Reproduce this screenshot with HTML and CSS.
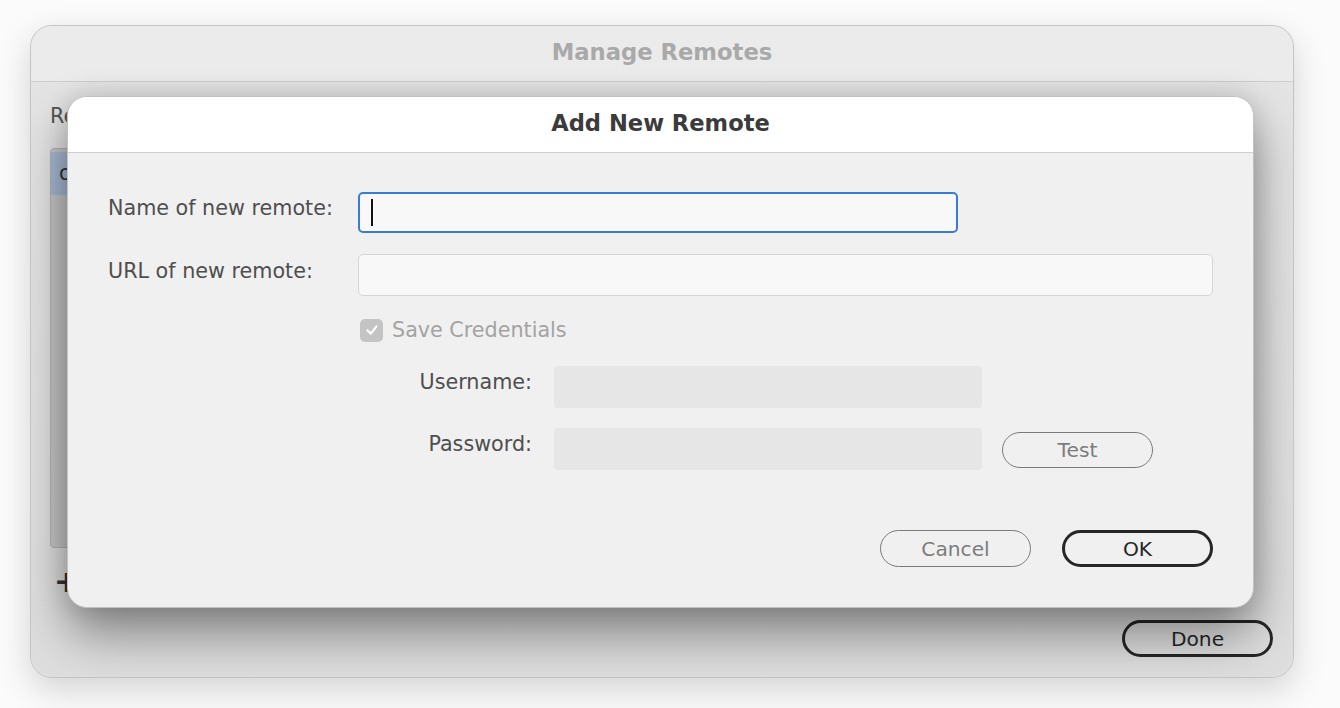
FILE: index.html
```html
<!DOCTYPE html>
<html lang="en">
<head>
    <meta charset="UTF-8">
    <meta name="viewport" content="width=device-width, initial-scale=1.0">
    <title>Manage Remotes</title>
    <link rel="stylesheet" href="styles.css">
</head>
<body>

<div class="window">
    <div class="window-header">Manage Remotes</div>

    <div class="window-body">
        <div class="list-label">Remotes:</div>
        <div class="remote-list">
            <div class="remote-row selected">origin</div>
        </div>
        <div class="list-tools">
            <span class="plus">+</span>
        </div>
        <div class="window-footer">
            <button class="btn btn-default">Done</button>
        </div>
    </div>

    <!-- sheet on top of the window -->
    <div class="sheet">
        <div class="sheet-header">Add New Remote</div>

        <div class="sheet-body">
            <div class="row row-name">
                <label for="name">Name of new remote:</label>
                <div class="input input-focus" id="name"><span class="caret"></span></div>
            </div>

            <div class="row row-url">
                <label for="url">URL of new remote:</label>
                <div class="input input-wide" id="url"></div>
            </div>

            <div class="check-row">
                <span class="checkbox">
                    <svg width="14" height="14" viewBox="0 0 14 14">
                        <path d="M2.5 7.5 L5.8 10.6 L11.5 3.4" fill="none" stroke="#fff" stroke-width="2.2" stroke-linecap="round" stroke-linejoin="round"/>
                    </svg>
                </span>
                <span class="check-label">Save Credentials</span>
            </div>

            <div class="cred-row cred-user">
                <label>Username:</label>
                <div class="input input-disabled"></div>
            </div>

            <div class="cred-row cred-pass">
                <label>Password:</label>
                <div class="input input-disabled"></div>
                <button class="btn btn-muted btn-test">Test</button>
            </div>

            <div class="sheet-buttons">
                <button class="btn btn-muted">Cancel</button>
                <button class="btn btn-default">OK</button>
            </div>
        </div>
    </div>
</div>

</body>
</html>
```

FILE: styles.css
```css
html, body {
    margin: 0;
    padding: 0;
}
body {
    font-family: "DejaVu Sans", "Liberation Sans", sans-serif;
    background-color: #fbfbfb;
    width: 1340px;
    height: 708px;
    overflow: hidden;
    padding-top: 25px;
    padding-left: 30px;
    box-sizing: border-box;
}
.window {
    position: relative;
    width: 1264px;
    height: 653px;
    box-sizing: border-box;
    border: 1px solid #c4c4c4;
    border-radius: 22px;
    background: #e6e6e6;
    box-shadow: 0 12px 34px rgba(0, 0, 0, 0.16);
    display: flex;
    flex-direction: column;
    overflow: hidden;
}
.window-header {
    height: 56px;
    flex: none;
    background: #ebebeb;
    border-bottom: 1px solid #cdcdcd;
    display: flex;
    align-items: center;
    justify-content: center;
    font-weight: bold;
    font-size: 22.7px;
    color: #a9a9a9;
    padding-bottom: 3px;
    box-sizing: border-box;
}
.window-body {
    flex: 1;
    display: flex;
    flex-direction: column;
    padding: 22px 20px 20px 19px;
    background: linear-gradient(#e4e4e4, #dedede);
}
.list-label {
    font-size: 20.7px;
    color: #555;
    height: 24px;
}
.remote-list {
    margin-top: 20px;
    height: 400px;
    width: 300px;
    border: 1px solid #b4b4b4;
    border-radius: 4px;
    background: #c8c8c8;
    padding-top: 3px;
    box-sizing: border-box;
}
.remote-row {
    height: 43px;
    line-height: 43px;
    padding-left: 8px;
    font-size: 20.7px;
    color: #333;
}
.remote-row.selected {
    background: #a8bbd6;
}
.list-tools {
    margin-top: 20px;
    height: 28px;
}
.plus {
    display: inline-block;
    margin-left: 4px;
    font-size: 30px;
    font-weight: bold;
    line-height: 28px;
    color: #333;
}
.window-footer {
    margin-top: auto;
    display: flex;
    justify-content: flex-end;
}

/* sheet */
.sheet {
    position: absolute;
    left: 36px;
    top: 70px;
    width: 1187px;
    height: 512px;
    border-radius: 20px;
    border: 1px solid #c2c2c2;
    box-sizing: border-box;
    background: #f0f0f0;
    overflow: hidden;
    box-shadow: 0 26px 50px rgba(0, 0, 0, 0.42), 0 0 24px rgba(0, 0, 0, 0.12);
}
.sheet-header {
    height: 56px;
    background: #fff;
    border-bottom: 1px solid #cfcfcf;
    display: flex;
    align-items: center;
    justify-content: center;
    font-weight: bold;
    font-size: 22.6px;
    color: #3b3b3b;
    box-sizing: border-box;
    padding-bottom: 3px;
}
.sheet-body {
    padding: 39px 40px 0 40px;
}
.row {
    display: flex;
    align-items: center;
}
.row label {
    width: 250px;
    flex: none;
    font-size: 20.7px;
    color: #4e4e4e;
    padding-bottom: 9px;
}
.row-name {
    height: 41px;
}
.row-url {
    height: 42px;
    margin-top: 21px;
}
.input {
    height: 100%;
    box-sizing: border-box;
    border-radius: 5px;
    background: #f8f8f8;
    border: 1px solid #d6d6d6;
}
.input-focus {
    width: 600px;
    border: 2px solid #3a7bd5;
    display: flex;
    align-items: center;
    padding-left: 11px;
}
.caret {
    width: 2px;
    height: 27px;
    background: #111;
}
.input-wide {
    width: 856px;
}
.check-row {
    margin-top: 22px;
    height: 24px;
    padding-left: 252px;
    display: flex;
    align-items: center;
}
.checkbox {
    width: 23px;
    height: 23px;
    border-radius: 5px;
    background: #c4c4c4;
    display: flex;
    align-items: center;
    justify-content: center;
}
.check-label {
    margin-left: 9px;
    font-size: 20.7px;
    color: #a3a3a3;
}
.cred-row {
    display: flex;
    align-items: center;
    height: 42px;
}
.cred-user {
    margin-top: 24px;
}
.cred-pass {
    margin-top: 20px;
}
.cred-row label {
    width: 424px;
    flex: none;
    text-align: right;
    font-size: 20.7px;
    color: #4e4e4e;
    padding-bottom: 11px;
}
.input-disabled {
    margin-left: 22px;
    width: 428px;
    border: none;
    background: #e6e6e6;
    border-radius: 4px;
}
.btn {
    font-family: "DejaVu Sans", "Liberation Sans", sans-serif;
    font-size: 20.2px;
    width: 151px;
    height: 37px;
    border-radius: 19px;
    background: transparent;
    padding: 0;
    box-sizing: border-box;
}
.btn-muted {
    border: 1.5px solid #7a7a7a;
    color: #7d7d7d;
}
.btn-default {
    border: 3px solid #262626;
    color: #262626;
}
.btn-test {
    margin-left: 20px;
    height: 36px;
    margin-top: 1px;
}
.sheet-buttons {
    margin-top: 60px;
    display: flex;
    justify-content: flex-end;
    gap: 31px;
}
```
